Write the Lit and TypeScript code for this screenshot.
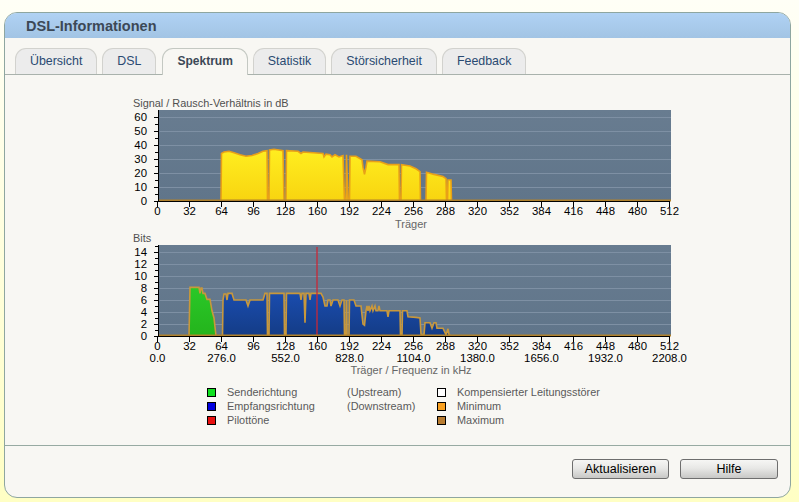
import {LitElement, html, svg, css} from 'lit';
import {customElement, property} from 'lit/decorators.js';

type Pt = [number, number];

const PLOT_LEFT = 33;
const PLOT_TOP = 15;
const PLOT_H = 91;

const snrData: Pt[] = [
    [63, 0], [63.5, 34], [66, 35], [71, 35.5], [76, 34.5], [82, 33], [88, 32], [94, 32.5], [100, 34], [105, 35.5],
    [109, 36], [109.5, 0], [111, 0], [111.5, 36.5], [116, 37], [125, 36], [126, 0], [128, 0], [128.5, 36],
    [140, 35.5], [143, 34], [145, 35], [165, 34], [166, 31.5], [168, 33.5], [172, 33], [174, 31.5], [177, 33],
    [181, 31.5], [185, 32.5], [186.5, 0], [188, 0], [188.5, 33], [190, 0], [191.5, 0], [192, 32], [198, 32], [204, 29.5],
    [205, 24], [206.5, 19], [208, 24], [209, 28.5], [222, 28], [230, 26], [241, 26], [241.5, 0], [243, 0], [243.5, 26],
    [252, 25], [258, 23], [262, 21], [262.5, 0], [268, 0], [268.5, 20.5], [276, 19], [285, 17.5], [288, 16],
    [288.5, 0], [289.5, 0], [290, 15], [293, 15], [293.5, 0]
];

const upData: Pt[] = [
    [31, 0], [32, 8.1], [41, 8.1], [42, 7.1], [43, 8], [44, 8], [45, 7.1], [47, 7.1], [49, 6.1], [52, 6.1],
    [54, 4.2], [56, 3], [58, 0]
];

const downData: Pt[] = [
    [64.5, 0], [65, 6], [66, 7], [68, 7], [69, 6], [70, 7.1], [74, 7.1], [76, 6], [88, 6], [90, 5], [92, 6],
    [105, 6], [107, 7.1], [109, 7.1], [109.5, 0], [111, 0], [111.5, 7.1], [126, 7.1], [126.5, 0], [128, 0], [128.5, 7.1],
    [142, 7.1], [143, 6], [144, 7.1], [146, 7.1], [147, 2.2], [148, 7.1], [151, 7.1], [152, 6], [153, 7.1],
    [163, 7.1], [165, 6.5], [167, 5], [169, 5], [170, 6], [172, 6], [173, 5], [175, 6], [180, 6], [182, 5], [184, 6],
    [186, 6], [186.5, 0], [188, 0], [188.5, 6], [189, 0], [191, 0], [191.5, 6], [196, 6], [198, 5], [203, 5],
    [205, 2], [206.5, 1.8], [208, 4.2], [209, 5], [210, 4.2], [211, 5], [212, 4.2], [214, 5], [215, 4.2], [217, 5], [218, 4.2],
    [220, 4.2], [221, 5], [222, 4.2], [229, 4.2], [230, 3.2], [231, 4.2], [242, 4.2], [242.5, 0], [244, 0], [244.5, 4.2], [249, 4.2],
    [250, 3.2], [258, 3.1], [262, 3], [263, 0.3], [266, 0.2], [267, 2.2], [272, 2.2], [274, 1.3], [276, 2.2], [278, 2.2], [279, 1.3],
    [285, 1.3], [288, 0.2], [290, 1.2], [291, 0.2], [293, 0]
];

function pointsOf(data: Pt[], scale: number): string {
    return data.map(([c, v]) => `${PLOT_LEFT + c},${PLOT_TOP + PLOT_H - v * scale}`).join(' ');
}

@customElement('dsl-chart')
export class DslChart extends LitElement {
    @property({type: String}) heading = '';
    @property({type: String}) caption = '';
    @property({type: Number}) scale = 1;
    @property({type: Number}) labelStep = 10;
    @property({type: Number}) minorStep = 5;
    @property({type: Boolean}) bits = false;

    private gridLines() {
        const out = [];
        for (let v = this.labelStep; v * this.scale < PLOT_H; v += this.labelStep) {
            const y = PLOT_TOP + PLOT_H - v * this.scale;
            out.push(svg`<line class="grid" x1=${PLOT_LEFT + 1} x2=${PLOT_LEFT + 513} y1=${y + 0.5} y2=${y + 0.5}></line>`);
        }
        return out;
    }

    private yTicks() {
        const out = [];
        for (let v = 0; v * this.scale < PLOT_H; v += this.minorStep) {
            const y = PLOT_TOP + PLOT_H - v * this.scale;
            const major = v % this.labelStep === 0;
            out.push(svg`<line class="axis" x1=${major ? PLOT_LEFT - 4 : PLOT_LEFT - 3} x2=${PLOT_LEFT} y1=${y + 0.5} y2=${y + 0.5}></line>`);
            if (major) {
                out.push(svg`<text class="num" x=${PLOT_LEFT - 11} y=${y + 4} text-anchor="end">${v}</text>`);
            }
        }
        return out;
    }

    private xTicks() {
        const out = [];
        for (let c = 0; c <= 512; c += 32) {
            const x = PLOT_LEFT + c - 0.5;
            out.push(svg`<line class="axis" x1=${x} x2=${x} y1=${PLOT_TOP + PLOT_H} y2=${PLOT_TOP + PLOT_H + 6}></line>`);
            out.push(svg`<text class="num" x=${x} y=${PLOT_TOP + PLOT_H + 14} text-anchor="middle">${c}</text>`);
            if (this.bits && c % 64 === 0) {
                out.push(svg`<text class="num" x=${x} y=${PLOT_TOP + PLOT_H + 26} text-anchor="middle">${(c * 4.3125).toFixed(1)}</text>`);
            }
        }
        return out;
    }

    private traces() {
        const s = this.scale;
        if (!this.bits) {
            return svg`
                <polygon points=${pointsOf(snrData, s)} fill="url(#yellow)"></polygon>
                <polyline class="trace snr" points=${pointsOf(snrData, s)}></polyline>`;
        }
        return svg`
            <polygon points=${pointsOf(upData, s)} fill="url(#green)"></polygon>
            <polygon points=${pointsOf(downData, s)} fill="url(#blue)"></polygon>
            <polyline class="trace" points=${pointsOf(upData, s)}></polyline>
            <polyline class="trace" points=${pointsOf(downData, s)}></polyline>
            <rect class="pilot" x=${PLOT_LEFT + 158} y=${PLOT_TOP + 2} width="2" height=${PLOT_H - 2}></rect>`;
    }

    render() {
        const base = PLOT_TOP + PLOT_H;
        return html`
            <svg class=${this.bits ? 'tall' : 'short'} viewBox="0 0 570 ${this.bits ? 148 : 135}">
                <defs>
                    <linearGradient id="yellow" x1="0" y1="0" x2="0" y2="1">
                        <stop offset="0" stop-color="#ffee20"></stop>
                        <stop offset="1" stop-color="#f8d410"></stop>
                    </linearGradient>
                    <linearGradient id="green" x1="0" y1="0" x2="0" y2="1">
                        <stop offset="0" stop-color="#2ac828"></stop>
                        <stop offset="1" stop-color="#24b41c"></stop>
                    </linearGradient>
                    <linearGradient id="blue" x1="0" y1="0" x2="0" y2="1">
                        <stop offset="0" stop-color="#1a4cae"></stop>
                        <stop offset="1" stop-color="#143c86"></stop>
                    </linearGradient>
                    <linearGradient id="plot" x1="0" y1="0" x2="0" y2="1">
                        <stop offset="0" stop-color="#687c90"></stop>
                        <stop offset="1" stop-color="#60758a"></stop>
                    </linearGradient>
                </defs>
                <text class="heading" x="8" y="12">${this.heading}</text>
                <rect x=${PLOT_LEFT + 1} y=${PLOT_TOP} width="512" height=${PLOT_H} fill="url(#plot)"></rect>
                ${this.gridLines()}
                ${this.traces()}
                <line class="floor" x1=${PLOT_LEFT} x2=${PLOT_LEFT + 513} y1=${base - 0.5} y2=${base - 0.5}></line>
                ${this.yTicks()}
                <line class="axis" x1=${PLOT_LEFT + 0.5} x2=${PLOT_LEFT + 0.5} y1=${PLOT_TOP} y2=${base + 1}></line>
                <line class="axis" x1=${PLOT_LEFT - 1} x2=${PLOT_LEFT + 512} y1=${base + 0.5} y2=${base + 0.5}></line>
                ${this.xTicks()}
                <text class="caption" x="286" y=${this.bits ? base + 38 : base + 27} text-anchor="middle">${this.caption}</text>
            </svg>
        `;
    }

    static styles = css`
        :host {
            display: block;
        }

        svg {
            display: block;
            width: 570px;
        }

        svg.short {
            height: 135px;
        }

        svg.tall {
            height: 148px;
        }

        text {
            font-family: "Liberation Sans", Arial, sans-serif;
        }

        .heading {
            font-size: 10.9px;
            fill: #505050;
        }

        .caption {
            font-size: 11px;
            fill: #666;
        }

        .num {
            font-size: 11.4px;
            fill: #000;
        }

        .axis {
            stroke: #000;
            stroke-width: 1;
        }

        .grid {
            stroke: #7e90a4;
            stroke-width: 1;
        }

        .floor {
            stroke: #b0812c;
            stroke-width: 2;
        }

        .trace {
            fill: none;
            stroke: #c8983c;
            stroke-width: 1.6;
        }

        .trace.snr {
            stroke: #e8a018;
        }

        .pilot {
            fill: #c82838;
            fill-opacity: 0.65;
        }
    `;
}

const legendRows = [
    {color: '#10e020', label: 'Senderichtung', note: '(Upstream)', color2: '#ffffff', label2: 'Kompensierter Leitungsstörer'},
    {color: '#0000e0', label: 'Empfangsrichtung', note: '(Downstream)', color2: '#f8a020', label2: 'Minimum'},
    {color: '#e81010', label: 'Pilottöne', note: '', color2: '#b87c30', label2: 'Maximum'}
];

const tabs = ['Übersicht', 'DSL', 'Spektrum', 'Statistik', 'Störsicherheit', 'Feedback'];

@customElement('app-root')
export class AppRoot extends LitElement {
    render() {
        return html`
            <div class="panel">
                <div class="title">DSL-Informationen</div>
                <div class="tabs">
                    ${tabs.map((t) => html`<div class="tab ${t === 'Spektrum' ? 'active' : ''}">${t}</div>`)}
                </div>
                <div class="content">
                    <dsl-chart
                        heading="Signal / Rausch-Verhältnis in dB"
                        caption="Träger"
                        scale="1.4"
                        labelStep="10"
                        minorStep="5"
                    ></dsl-chart>
                    <dsl-chart
                        bits
                        heading="Bits"
                        caption="Träger / Frequenz in kHz"
                        scale="6"
                        labelStep="2"
                        minorStep="1"
                    ></dsl-chart>
                    <div class="legend">
                        ${legendRows.map((r) => html`
                            <span class="swatch" style="background:${r.color}"></span>
                            <span>${r.label}</span>
                            <span>${r.note}</span>
                            <span class="swatch" style="background:${r.color2}"></span>
                            <span>${r.label2}</span>
                        `)}
                    </div>
                </div>
                <div class="footer">
                    <button class="wide">Aktualisieren</button>
                    <button>Hilfe</button>
                </div>
            </div>
        `;
    }

    static styles = css`
        :host {
            display: block;
            height: 502px;
            box-sizing: border-box;
            padding: 12px 8px 4px 4px;
            background: linear-gradient(#fffff6, #ffffc4);
            font-family: "Liberation Sans", Arial, sans-serif;
        }

        .panel {
            display: flex;
            flex-direction: column;
            height: 100%;
            box-sizing: border-box;
            border: 1px solid #8ea6a0;
            border-radius: 13px;
            background: #f8f7f3;
            overflow: hidden;
        }

        .title {
            height: 25px;
            line-height: 26px;
            padding-left: 21px;
            font-size: 14.5px;
            font-weight: 700;
            color: #3c4856;
            background: linear-gradient(#b0d2f4, #a2c4e4);
        }

        .tabs {
            display: flex;
            gap: 5px;
            padding: 10px 0 0 10px;
            border-bottom: 1px solid #a9b2ac;
            height: 26px;
        }

        .tab {
            height: 26px;
            box-sizing: border-box;
            padding: 0 14px;
            line-height: 25px;
            font-size: 12.4px;
            color: #2a4a72;
            background: #ececec;
            border: 1px solid #d2d2ce;
            border-bottom: none;
            border-radius: 11px 11px 0 0;
        }

        .tab.active {
            height: 27px;
            margin-left: 1px;
            font-size: 12px;
            font-weight: 700;
            color: #3c4856;
            background: #f8f7f3;
            border-color: #c4c8c2;
        }

        .content {
            flex: 1;
            box-sizing: border-box;
            padding: 20px 0 0 120px;
        }

        .legend {
            display: grid;
            grid-template-columns: 20px 120px 90px 20px auto;
            grid-auto-rows: 14px;
            align-items: center;
            margin: 7px 0 0 82px;
            font-size: 10.9px;
            color: #5a5a5a;
        }

        .swatch {
            width: 7px;
            height: 7px;
            border: 1px solid #000;
        }

        .footer {
            display: flex;
            justify-content: flex-end;
            gap: 11px;
            height: 52px;
            box-sizing: border-box;
            padding: 13px 12px 0 0;
            border-top: 1px solid #97aaa2;
        }

        button {
            width: 98px;
            height: 20px;
            padding: 0;
            font-family: inherit;
            font-size: 12.5px;
            color: #000;
            background: linear-gradient(#f6f6f4, #e8e8e6 45%, #c8c8c6);
            border: 1px solid #6e6e6e;
            border-radius: 3px;
        }

        button.wide {
            width: 97px;
        }
    `;
}
